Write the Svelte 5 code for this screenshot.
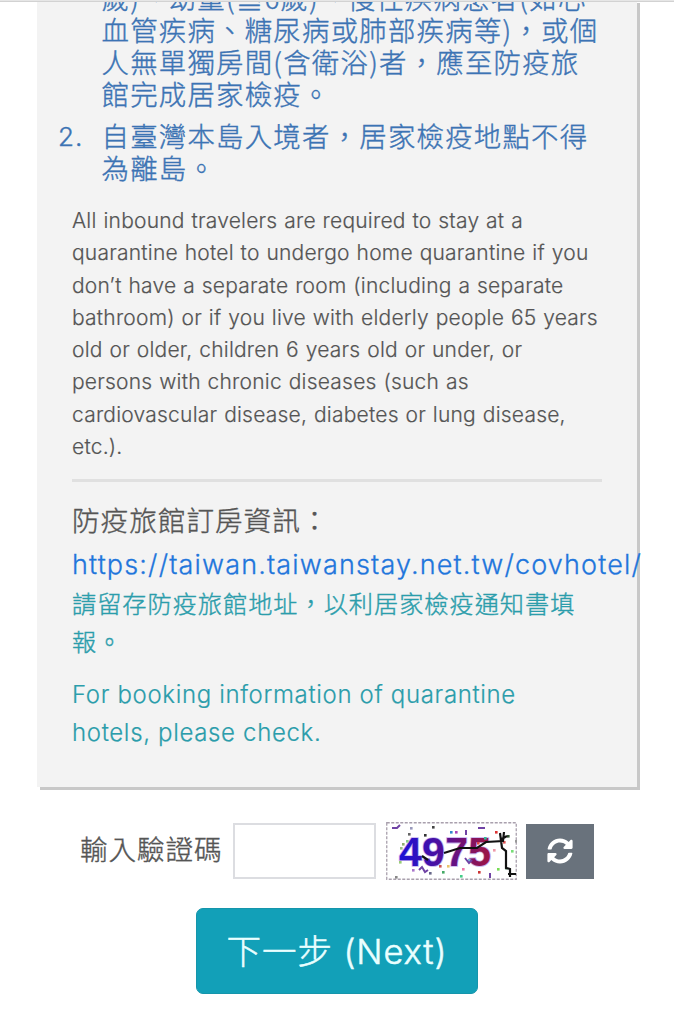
<script lang="ts">
  // the first rule starts further up, so its number is scrolled away
  const rules: { num: string; lines: string[] }[] = [
    {
      num: '',
      lines: ['歲)、幼童(≦6歲)、慢性疾病患者(如心', '血管疾病、糖尿病或肺部疾病等)，或個', '人無單獨房間(含衛浴)者，應至防疫旅', '館完成居家檢疫。'],
    },
    { num: '2.', lines: ['自臺灣本島入境者，居家檢疫地點不得', '為離島。'] },
  ];

  const notice = [
    'All inbound travelers are required to stay at a',
    'quarantine hotel to undergo home quarantine if you',
    'don’t have a separate room (including a separate',
    'bathroom) or if you live with elderly people 65 years',
    'old or older, children 6 years old or under, or',
    'persons with chronic diseases (such as',
    'cardiovascular disease, diabetes or lung disease,',
    'etc.).',
  ];

  // captcha speckles: x, y, colour
  const specks: [number, number, string][] = [
    [16, 21, '#8fae70'], [22, 11, '#666'], [38, 12, '#333'], [14, 25, '#9b8'], [20, 18, '#8c8'],
    [46, 4, '#444'], [64, 9, '#38c'], [69, 9, '#a4b'], [91, 20, '#d44'], [109, 9, '#d33'],
    [117, 19, '#d55'], [121, 13, '#353'], [125, 28, '#7d7'], [129, 18, '#999'], [111, 46, '#7d5'],
    [119, 45, '#7a8'], [92, 49, '#c33'], [74, 53, '#4c8'], [56, 49, '#4a6'], [43, 50, '#668'],
    [26, 47, '#a7c'], [13, 39, '#9c7'], [53, 43, '#c55'], [9, 54, '#888'], [61, 43, '#e9c46a'],
    [98, 15, '#3b9'], [76, 46, '#e7a'], [107, 27, '#e9a'], [24, 5, '#99b'], [82, 37, '#7bd'],
  ];

  let code = $state('');
</script>

<div class="page">
  <div class="topline"></div>
  <section class="card">
    <ol>
      {#each rules as rule}
        <li>
          <span class="num">{rule.num}</span>
          <div>
            {#each rule.lines as line}<span class="line">{line}</span>{/each}
          </div>
        </li>
      {/each}
    </ol>
    <p class="notice">
      {#each notice as line}<span class="line">{line}</span>{/each}
    </p>
    <hr />
    <h2>防疫旅館訂房資訊：</h2>
    <a href="https://taiwan.taiwanstay.net.tw/covhotel/">https://taiwan.taiwanstay.net.tw/covhotel/</a>
    <p class="keep">
      <span class="line">請留存防疫旅館地址，以利居家檢疫通知書填</span>
      <span class="line">報。</span>
    </p>
    <p class="booking">
      <span class="line">For booking information of quarantine</span>
      <span class="line">hotels, please check.</span>
    </p>
  </section>

  <form onsubmit={(e) => e.preventDefault()}>
    <div class="verify">
      <label for="code">輸入驗證碼</label>
      <input id="code" type="text" bind:value={code} />
      <svg class="captcha" width="131" height="58" viewBox="0 0 131 58">
        <defs>
          <linearGradient id="ink" x1="0" x2="1">
            <stop offset="0" stop-color="#1a12d8" />
            <stop offset="0.45" stop-color="#4f109c" />
            <stop offset="1" stop-color="#a01440" />
          </linearGradient>
        </defs>
        <rect x="0.75" y="0.75" width="129.5" height="56.5" fill="#fff" stroke="#a9a0ad" stroke-width="1.3" stroke-dasharray="3 1.5" />
        <text x="13" y="44" textLength="92" fill="url(#ink)" stroke="#c9b4f0" stroke-width="1.6" paint-order="stroke">4975</text>
        {#each specks as [x, y, fill]}
          <rect {x} {y} width="2.6" height="2.6" {fill} />
        {/each}
        <path d="M6 6h5l3-3M92 6h7M33 48l3-3 3 5 3-2M79 36l4 5 3-3M104 51v5M80 8v5" fill="none" stroke="#7043a5" stroke-width="2" />
        <path d="M36 34l6 4M58 31l16-5h17l9-6 17-1 1-9M114 11l2 15 4 3v17l4 1v8M114 18l7-4M122 52h8" fill="none" stroke="#111" stroke-width="2.2" />
      </svg>
      <button class="refresh" type="button" aria-label="refresh">
        <svg width="26" height="26" viewBox="0 0 512 512" fill="#fff">
          <path d="M371 134c-32-29-72-45-115-45-77 0-144 53-163 126-1 5-6 9-12 9H24c-7 0-13-7-12-14C33 94 135 8 256 8c66 0 127 26 171 69l36-36c15-15 41-4 41 17v134c0 13-11 24-24 24H346c-21 0-32-26-17-41zM32 296h134c21 0 32 26 17 41l-42 41c32 29 72 45 115 45 77 0 144-53 163-126 1-5 6-9 12-9h57c7 0 13 7 12 14-21 116-123 202-244 202-66 0-127-26-171-69l-36 36c-15 15-41 4-41-17V320c0-13 11-24 24-24z" />
        </svg>
      </button>
    </div>
    <button class="next" type="submit">下一步 (Next)</button>
  </form>
</div>

<style>
  :global(body) {
    margin: 0;
    background: #fff;
  }
  .page {
    height: 1024px;
    overflow: hidden;
    color: #555;
    font-family: Inter, 'Noto Sans CJK TC', sans-serif;
  }
  .topline {
    position: absolute;
    top: 0;
    left: 0;
    width: 100%;
    height: 1px;
    background: #e6e6e6;
    border-bottom: 1px solid #d2d2d2;
  }
  .card {
    display: flow-root;
    box-sizing: border-box;
    width: 600px;
    height: 787px;
    margin-left: 37px;
    padding: 0 35px;
    background: #f3f3f3;
    box-shadow: 3px 3px 0 #c8c8c8;
  }
  .line {
    display: block;
    white-space: nowrap;
  }
  ol {
    margin: -19px 0 0 -14px;
    padding: 0;
    list-style: none;
    color: #3c73b4;
    font-family: 'Noto Sans CJK TC', sans-serif;
    font-size: 27.4px;
    font-weight: 300;
    letter-spacing: 1.25px;
    line-height: 32px;
    -webkit-text-stroke: 0.4px currentColor;
  }
  li {
    display: flex;
    margin-bottom: 10px;
  }
  .num {
    width: 43.5px;
    flex: none;
    padding-top: 2px;
    font-family: Inter, sans-serif;
    font-size: 26px;
    letter-spacing: 1px;
  }
  p {
    margin: 0;
  }
  .notice {
    padding-top: 12px;
    font-size: 21px;
    font-weight: 300;
    letter-spacing: 0.22px;
    word-spacing: 0.7px;
    line-height: 32.3px;
    -webkit-text-stroke: 0.2px currentColor;
  }
  hr {
    height: 3px;
    margin: 16px 0 20px;
    border: 0;
    background: #e0e0e0;
  }
  h2 {
    margin: 0;
    font-size: 27.6px;
    font-weight: 300;
    letter-spacing: 1px;
    line-height: 38px;
    -webkit-text-stroke: 0.4px currentColor;
  }
  a {
    display: block;
    color: #1f76dc;
    font-size: 27px;
    font-weight: 300;
    letter-spacing: 1.15px;
    line-height: 49px;
    text-decoration: none;
    white-space: nowrap;
    -webkit-text-stroke: 0.3px currentColor;
  }
  .keep {
    margin-top: -3px;
    color: #2b9dab;
    font-size: 24.2px;
    font-weight: 300;
    letter-spacing: 0.98px;
    line-height: 38px;
    -webkit-text-stroke: 0.4px currentColor;
  }
  .booking {
    padding-top: 14px;
    color: #2b9dab;
    font-size: 24px;
    font-weight: 300;
    letter-spacing: 0.66px;
    line-height: 38px;
    -webkit-text-stroke: 0.2px currentColor;
  }
  form {
    display: flex;
    flex-direction: column;
    align-items: center;
  }
  .verify {
    display: flex;
    align-items: center;
    align-self: flex-start;
    margin: 35px 0 0 80px;
  }
  label {
    width: 153px;
    padding-bottom: 2px;
    font-size: 27.6px;
    font-weight: 300;
    letter-spacing: 0.9px;
    line-height: 54px;
    white-space: nowrap;
    -webkit-text-stroke: 0.4px currentColor;
  }
  input {
    box-sizing: border-box;
    width: 143px;
    height: 56px;
    margin: 0 10px 0 0;
    border: 2px solid #dcdde1;
    padding: 0 10px;
    background: #fff;
    font-size: 26px;
  }
  .captcha text {
    font: bold 41px 'Liberation Sans', sans-serif;
  }
  .refresh {
    display: grid;
    place-items: center;
    width: 68px;
    height: 55px;
    margin-left: 9px;
    border: 0;
    padding: 0;
    background: #69727c;
  }
  .next {
    width: 282px;
    height: 86px;
    margin: 28px 0 0;
    border: 1px solid #1595ab;
    border-radius: 7px;
    padding: 0 0 5px;
    background: #12a0b8;
    color: #e9ffff;
    font-family: Inter, 'Noto Sans CJK TC', sans-serif;
    font-size: 34.5px;
    font-weight: 300;
    letter-spacing: 0.9px;
    -webkit-text-stroke: 0.5px currentColor;
  }
</style>
